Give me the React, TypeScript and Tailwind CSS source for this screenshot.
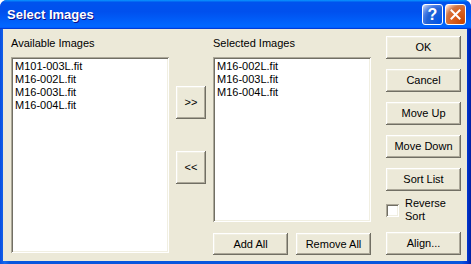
const raised =
  'flex items-center justify-center bg-[#ECE9D8] text-[11px] leading-[13px] text-black shadow-[inset_-1px_-1px_0_#716F64,inset_1px_1px_0_#FFFFFF,inset_-2px_-2px_0_#ACA899,inset_2px_2px_0_#F1EFE2]';

const sunken =
  'bg-white p-[2px] shadow-[inset_1px_1px_0_#ACA899,inset_-1px_-1px_0_#FFFFFF,inset_2px_2px_0_#716F64,inset_-2px_-2px_0_#F1EFE2]';

function Btn({ label, className = '' }: { label: string; className?: string }) {
  return <button className={`${raised} ${className}`}>{label}</button>;
}

function ListBox({ items, className = '' }: { items: string[]; className?: string }) {
  return (
    <div className={`${sunken} ${className}`}>
      <ul className="pl-[2px] pt-[1px] text-[11px] leading-[13px] text-black">
        {items.map((it) => (
          <li key={it}>{it}</li>
        ))}
      </ul>
    </div>
  );
}

export default function App() {
  const available = ['M101-003L.fit', 'M16-002L.fit', 'M16-003L.fit', 'M16-004L.fit'];
  const selected = ['M16-002L.fit', 'M16-003L.fit', 'M16-004L.fit'];

  return (
    <div className="w-[471px] h-[264px] bg-white" style={{ fontFamily: '"Liberation Sans", Arial, sans-serif' }}>
      <div className="w-[471px] h-[264px] flex flex-col rounded-t-[7px] overflow-hidden bg-[#0831d9]">
        {/* title bar */}
        <div className="h-[29px] shrink-0 flex items-center pl-[7px] pr-[5px] bg-[linear-gradient(180deg,#0997ff,#0053ee_8%,#0050ee_40%,#06f_88%,#06f_93%,#005bff_95%,#003dd7_96%,#003dd7)]">
          <span className="flex-1 text-white font-bold text-[13px] [text-shadow:1px_1px_#0f1089] pt-[1px]">
            Select Images
          </span>
          <div className="flex gap-[2px]">
            <div className="w-[21px] h-[21px] rounded-[3px] border border-white flex items-center justify-center bg-[radial-gradient(circle_at_90%_90%,#0054e9_0,#2263d5_55%,#4479e4_70%,#a3bbec_90%,#fff_100%)]">
              <span className="text-white font-bold text-[16px] leading-none">?</span>
            </div>
            <div className="w-[21px] h-[21px] rounded-[3px] border border-white flex items-center justify-center bg-[radial-gradient(circle_at_90%_90%,#cc4600_0,#dc6527_55%,#cd7546_70%,#ffccb2_90%,#fff_100%)]">
              <svg width="11" height="11" viewBox="0 0 11 11">
                <path d="M1.5 1.5 L9.5 9.5 M9.5 1.5 L1.5 9.5" stroke="white" strokeWidth="2" strokeLinecap="square" />
              </svg>
            </div>
          </div>
        </div>

        {/* client area with frame */}
        <div className="flex-1 px-[3px] pb-[3px] pr-[4px] bg-[linear-gradient(90deg,#0a4fe0,#166aee_1%,#0855dd_2%,#0855dd_98%,#003bda_99%,#001ea0)]">
          <div className="h-full bg-[#ECE9D8] flex">
            {/* available */}
            <div className="ml-[8px] w-[158px] flex flex-col">
              <div className="h-[28px] pt-[8px] text-[11px] leading-[13px]">Available Images</div>
              <ListBox items={available} className="h-[196px]" />
            </div>

            {/* arrows */}
            <div className="ml-[7px] w-[30px] flex flex-col pt-[57px]">
              <Btn label=">>" className="h-[33px]" />
              <Btn label="<<" className="h-[33px] mt-[32px]" />
            </div>

            {/* selected */}
            <div className="ml-[7px] w-[158px] flex flex-col">
              <div className="h-[28px] pt-[8px] text-[11px] leading-[13px]">Selected Images</div>
              <ListBox items={selected} className="h-[165px]" />
              <div className="mt-[11px] flex gap-[8px]">
                <Btn label="Add All" className="w-[75px] h-[22px]" />
                <Btn label="Remove All" className="w-[75px] h-[22px]" />
              </div>
            </div>

            {/* right column */}
            <div className="ml-[15px] w-[75px] flex flex-col pt-[7px]">
              <div className="flex flex-col gap-[10px]">
                <Btn label="OK" className="h-[23px]" />
                <Btn label="Cancel" className="h-[23px]" />
                <Btn label="Move Up" className="h-[23px]" />
                <Btn label="Move Down" className="h-[23px]" />
                <Btn label="Sort List" className="h-[23px]" />
              </div>
              <div className="mt-[6px] h-[26px] flex items-center">
                <div className="w-[13px] h-[13px] bg-white shadow-[inset_1px_1px_0_#ACA899,inset_-1px_-1px_0_#FFFFFF,inset_2px_2px_0_#716F64,inset_-2px_-2px_0_#F1EFE2]" />
                <div className="ml-[6px] text-[11px] leading-[13px]">
                  Reverse
                  <br />
                  Sort
                </div>
              </div>
              <Btn label="Align..." className="h-[23px] mt-[9px]" />
            </div>
          </div>
        </div>
      </div>
    </div>
  );
}
